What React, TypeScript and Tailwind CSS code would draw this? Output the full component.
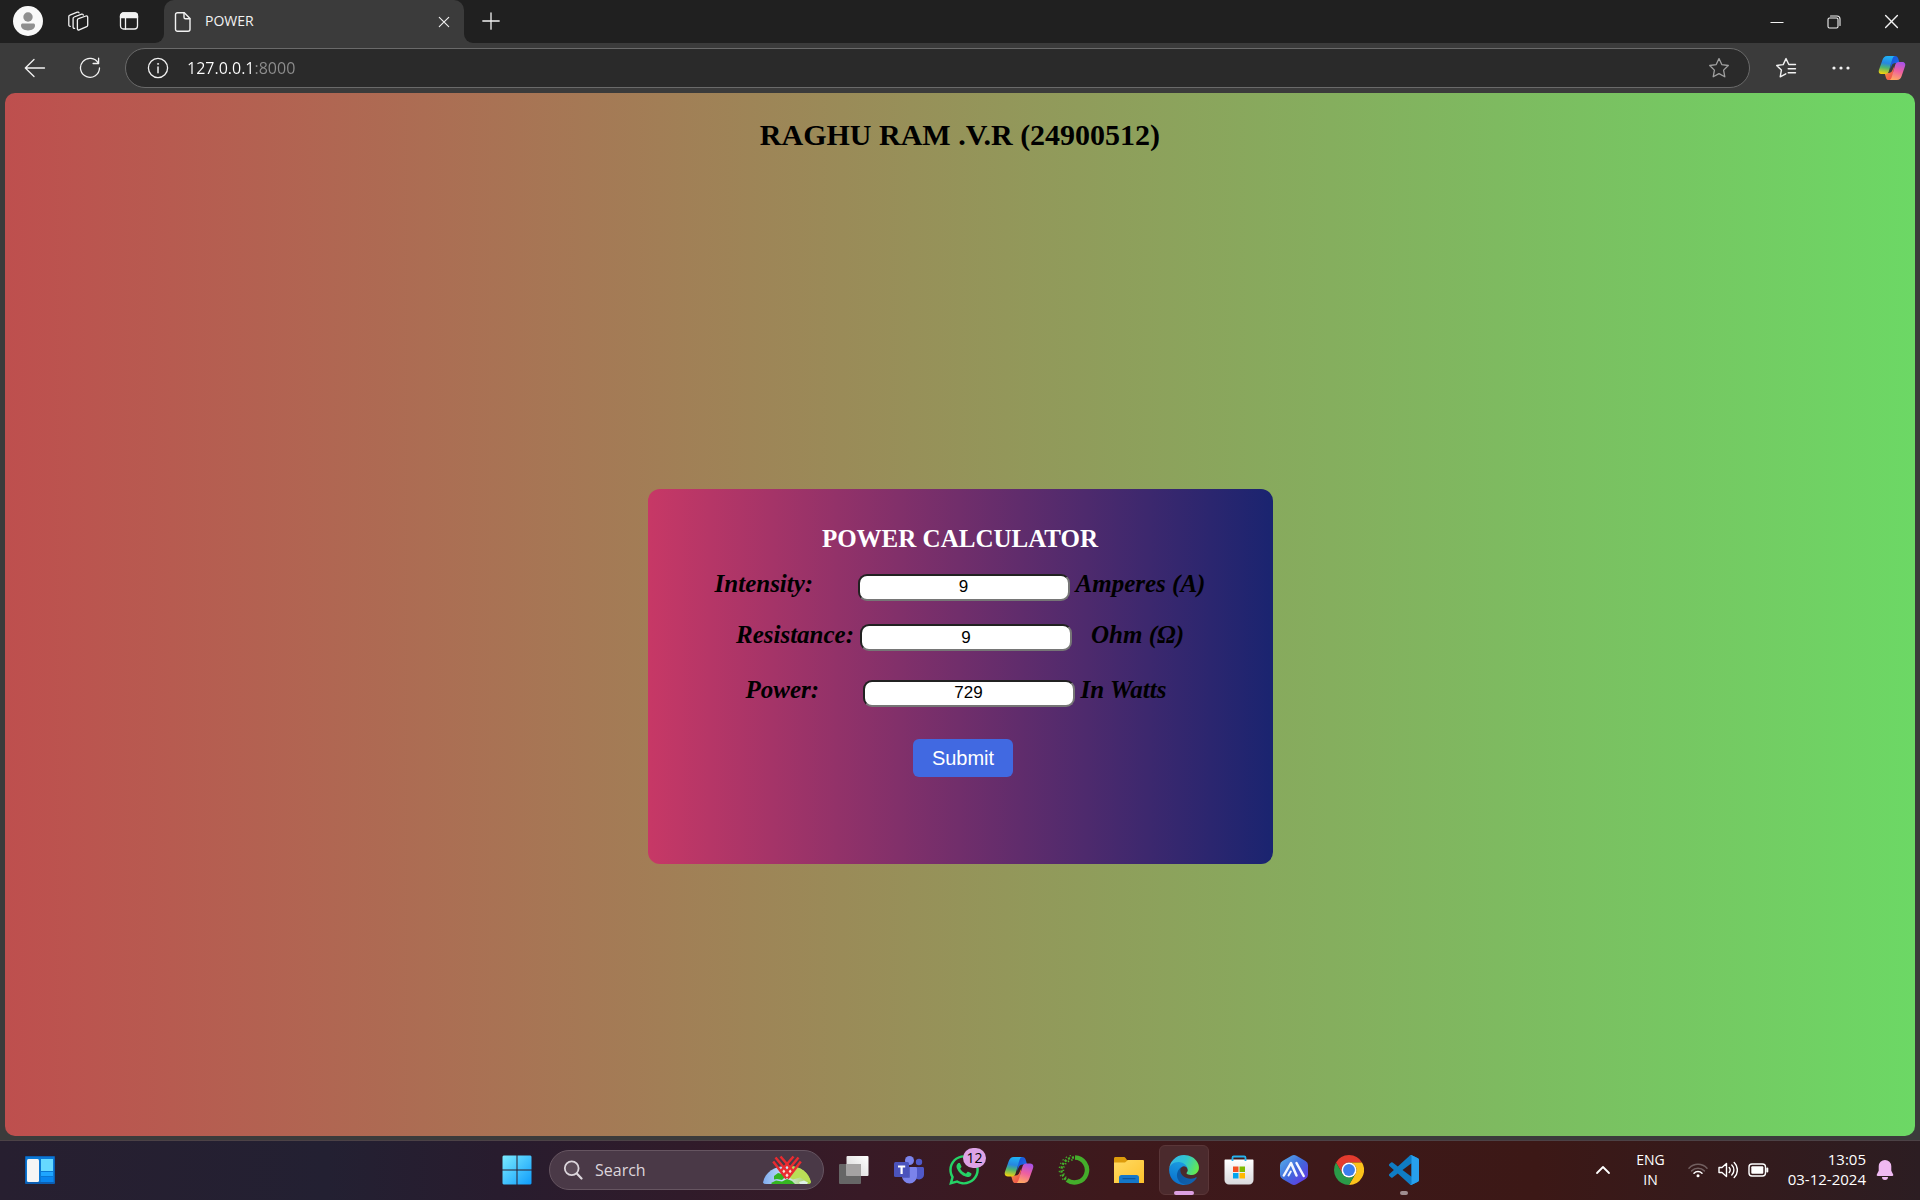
import { useState, type ReactNode } from "react";
import { FaWhatsapp } from "react-icons/fa";

/* ---------- browser chrome icons ---------- */

const line = { fill: "none", stroke: "currentColor", strokeLinecap: "round", strokeLinejoin: "round" } as const;

function ProfileIcon() {
  return (
    <svg viewBox="0 0 30 30" className="size-[30px]">
      <circle cx="15" cy="15" r="15" fill="#f9f9f9" />
      <circle cx="15" cy="11" r="4.7" fill="#8f8f8f" />
      <path d="M8 19.2c0-1 .8-1.7 1.7-1.7h10.6c.9 0 1.7.7 1.7 1.7 0 3.4-3 5.2-7 5.2s-7-1.800-7-5.200z" fill="#8f8f8f" />
    </svg>
  );
}

function WorkspacesIcon() {
  return (
    <svg viewBox="0 0 22 22" className="size-[22px]" {...line} strokeWidth="1.300">
      <path d="M11.500 8.600 18.900 6c.9-.3 1.800.3 1.800 1.200v8c0 .7-.4 1.200-1 1.400l-7.500 3.300c-.9.4-1.800-.2-1.800-1.100v-8.700c0-.7.400-1.300 1.100-1.500z" />
      <path d="M7.600 18.300c-.8.200-1.500-.3-1.500-1.100V8.500c0-.7.4-1.300 1.100-1.500l7.400-2.800c.8-.3 1.600.1 1.700.8" />
      <path d="M3.300 16.300c-.8.100-1.500-.4-1.500-1.200V6.600c0-.7.400-1.300 1.100-1.500l7.400-2.900c.8-.3 1.500 0 1.700.7" />
    </svg>
  );
}

function TabActionsIcon() {
  return (
    <svg viewBox="0 0 20 20" className="size-5" {...line} strokeWidth="1.300">
      <rect x="1.500" y="2" width="17" height="16" rx="3" />
      <path d="M1.500 6.500V5a3 3 0 0 1 3-3h11a3 3 0 0 1 3 3v1.500z" fill="currentColor" />
      <path d="M6.500 7v11" />
    </svg>
  );
}

function DocumentIcon() {
  return (
    <svg viewBox="0 0 18 22" className="h-[22px] w-[18px]" {...line} strokeWidth="1.400">
      <path d="M3.500 1.700h6.800L16 7.500v10.800a2 2 0 0 1-2 2H3.500a2 2 0 0 1-2-2V3.700a2 2 0 0 1 2-2z" />
      <path d="M10 1.900v4.300c0 .9.600 1.500 1.500 1.500h4.300" />
    </svg>
  );
}

function CrossIcon({ className }: { className: string }) {
  return (
    <svg viewBox="0 0 14 14" className={className} {...line} strokeWidth="1.300">
      <path d="m1.500 1.500 11 11m0-11-11 11" />
    </svg>
  );
}

function PlusIcon() {
  return (
    <svg viewBox="0 0 18 18" className="size-[18px]" {...line} strokeWidth="1.300">
      <path d="M9 .8v16.400M.8 9h16.400" />
    </svg>
  );
}

function BackIcon() {
  return (
    <svg viewBox="0 0 22 20" className="h-5 w-[22px]" {...line} strokeWidth="1.300">
      <path d="M20.500 10H1.500M10 1.500 1.300 10l8.700 8.500" />
    </svg>
  );
}

function ReloadIcon() {
  return (
    <svg viewBox="0 0 22 22" className="size-[22px]" {...line} strokeWidth="1.300">
      <path d="M19.300 6.200A9.500 9.500 0 1 0 20.500 11" />
      <path d="M19.600 1.200v5.300h-5.500" />
    </svg>
  );
}

function InfoIcon() {
  return (
    <svg viewBox="0 0 22 22" className="size-[22px]" {...line} strokeWidth="1.300">
      <circle cx="11" cy="11" r="9.600" />
      <path d="M11 10v5.800" strokeWidth="1.500" />
      <circle cx="11" cy="6.900" r=".6" fill="currentColor" strokeWidth=".6" />
    </svg>
  );
}

function StarIcon() {
  return (
    <svg viewBox="0 0 22 22" className="size-[22px]" {...line} strokeWidth="1.300">
      <path d="m11 1.600 2.800 6 6.500.9-4.700 4.600 1.200 6.700-5.800-3.200-5.800 3.200 1.200-6.700-4.700-4.600 6.500-.9z" />
    </svg>
  );
}

function FavoritesIcon() {
  return (
    <svg viewBox="0 0 22 22" className="size-[22px]" {...line} strokeWidth="1.400">
      <path d="M20.500 7.500h-6.700L11 1.600l-2.800 6-6.500.9 4.700 4.600-1.200 6.700 5.600-3" />
      <path d="M13.200 11.800h7.300M13.200 15.800h7.300" />
    </svg>
  );
}

function MoreIcon() {
  return (
    <svg viewBox="0 0 18 4" className="h-1 w-[18px]" fill="currentColor">
      <circle cx="2" cy="2" r="1.600" />
      <circle cx="9" cy="2" r="1.600" />
      <circle cx="16" cy="2" r="1.600" />
    </svg>
  );
}

function MinimizeIcon() {
  return (
    <svg viewBox="0 0 14 14" className="size-3.5">
      <path d="M.5 7.500h13" stroke="currentColor" />
    </svg>
  );
}

function RestoreIcon() {
  return (
    <svg viewBox="0 0 14 14" className="size-3.5" {...line} strokeWidth="1.100">
      <rect x="1" y="3" width="10" height="10" rx="1.500" />
      <path d="M3.500 1h6.500a3 3 0 0 1 3 3v6.500" />
    </svg>
  );
}

function CopilotIcon({ id, className }: { id: string; className: string }) {
  return (
    <svg viewBox="0 0 30 28" className={className}>
      <defs>
        <linearGradient id={`${id}-a`} x1="0.500" y1="0" x2="0.350" y2="1">
          <stop offset="0" stopColor="#1fb2f5" />
          <stop offset=".4" stopColor="#2787e0" />
          <stop offset=".65" stopColor="#4fb56f" />
          <stop offset="1" stopColor="#f4d20c" />
        </linearGradient>
        <linearGradient id={`${id}-b`} x1="0.700" y1="0" x2="0.400" y2="1">
          <stop offset="0" stopColor="#a852e8" />
          <stop offset=".5" stopColor="#ee5fa0" />
          <stop offset="1" stopColor="#ffa764" />
        </linearGradient>
        <linearGradient id={`${id}-c`} x1="0" y1="0" x2="1" y2="1">
          <stop offset="0" stopColor="#1350d4" />
          <stop offset="1" stopColor="#2372f0" />
        </linearGradient>
        <linearGradient id={`${id}-d`} x1="0" y1="0" x2="1" y2="1">
          <stop offset="0" stopColor="#f5a13c" />
          <stop offset="1" stopColor="#ee3f50" />
        </linearGradient>
      </defs>
      <path d="M15 1h3.500c1.700 0 2.600 1 3.100 2.600l1.500 4.900h-4.300c-2 0-3.500 1-4.200 3L13 15z" fill={`url(#${id}-c)`} />
      <path d="M15 27h-3.300c-1.900 0-2.700-1-3.200-2.600L7 19.500h4.300c2 0 3.400-1 4.100-3L17.500 12z" fill={`url(#${id}-d)`} />
      <path d="M18.500 1H9.800C7 1 5.500 3 4.600 5.600L1 15.800c-1 3 .5 4.700 3 4.700h3.700c2 0 3.300-1 3.900-2.900L15.500 4c.6-1.800 1.300-3 3-3z" fill={`url(#${id}-a)`} />
      <path d="M11.700 27h8.600c2.700 0 4.200-1.800 5.100-4.400L29 12.200c1-3-.4-4.700-3-4.700h-3.700c-2 0-3.200 1-3.800 2.900L14.600 24c-.6 1.800-1.300 3-2.900 3z" fill={`url(#${id}-b)`} />
    </svg>
  );
}

/* ---------- taskbar icons ---------- */

function WidgetsIcon() {
  return (
    <svg viewBox="0 0 30 28" className="h-7 w-[30px]">
      <rect width="30" height="28" rx="1" fill="#0c5fb4" />
      <rect x="1" y="1" width="28" height="25" fill="#0a78d4" />
      <rect x="2" y="3" width="12" height="23" rx="1.500" fill="#f5f5f5" />
      <rect x="16" y="3" width="12" height="12" fill="#66d9ff" />
      <rect x="16" y="16" width="12" height="4" fill="#1fa6ff" />
      <rect x="16" y="21" width="12" height="5" fill="#0a86ee" />
    </svg>
  );
}

function WindowsIcon() {
  return (
    <svg viewBox="0 0 30 30" className="size-[30px]">
      <defs>
        <linearGradient id="win" gradientUnits="userSpaceOnUse" x1="0" y1="0" x2="30" y2="30">
          <stop offset="0" stopColor="#7cecff" />
          <stop offset="1" stopColor="#0d9bfb" />
        </linearGradient>
      </defs>
      <path d="M1.500.5H14.500V14.500H.5V1.500zM15.500.5H28.500L29.500 1.500V14.500H15.500zM.5 15.500H14.500V29.500H1.500L.5 28.500zM15.500 15.500H29.500V28.500L28.500 29.500H15.500z" fill="url(#win)" />
    </svg>
  );
}

function SearchIcon() {
  return (
    <svg viewBox="0 0 20 20" className="size-5" {...line} stroke="#dcd6dc">
      <circle cx="8.700" cy="8.200" r="6.900" strokeWidth="1.800" fill="#ffffff18" />
      <path d="m13.800 13.500 4.700 5" strokeWidth="2.200" />
    </svg>
  );
}

function GlobeHeartIcon() {
  return (
    <svg viewBox="0 0 48 30" className="h-[30px] w-12">
      <defs>
        <linearGradient id="globe" x1="0" x2="1">
          <stop offset="0" stopColor="#7fadf0" />
          <stop offset=".5" stopColor="#cfe6f8" />
          <stop offset="1" stopColor="#a4d435" />
        </linearGradient>
      </defs>
      <path d="M0 27.500C2 17 11.500 11 24 11S46 17 48 27.500Q47.500 29 45 29H3Q.5 29 0 27.500z" fill="url(#globe)" />
      <path d="M26 11c12 .2 19.500 6 22 16.500l-5-2-6-3-7 2-6-3z" fill="#b9de57" />
      <path d="M11 21l4-3 4 1 3 3-3 3-5-1-3 .5zM8 28l5-2.500 6 1 5-2.500 5 2 3 3H9z" fill="#35b521" />
      <path d="M36 27l5-1.500 4 2-1 1.500h-7z" fill="#ddf1e6" />
      <path d="m24 23-7-8.500h14z" fill="#f8ded0" />
      <g stroke="#ea2b30" strokeWidth="2.500" fill="none">
        <path d="M10.200 6.500 23.300 23.500M12.500 2.500 27 20M17.500 1.500 30.500 16.500" />
        <path d="M37.800 6.500 24.700 23.500M35.500 2.500 21 20M30.500 1.500 17.500 16.500" />
      </g>
    </svg>
  );
}

function TaskViewIcon() {
  return (
    <svg viewBox="0 0 30 28" className="h-7 w-[30px]">
      <defs>
        <linearGradient id="tv" x1="0" x2="1" y1="1" y2="0">
          <stop offset="0" stopColor="#d4d4d4" />
          <stop offset="1" stopColor="#fff" />
        </linearGradient>
      </defs>
      <rect y="8" width="22" height="20" rx="1" fill="#666" />
      <rect x="7.500" width="22" height="20" rx="1" fill="url(#tv)" />
      <rect x="7.500" y="8" width="14.500" height="12" fill="#a5a3a3" />
    </svg>
  );
}

function TeamsIcon() {
  return (
    <svg viewBox="0 0 30 28" className="h-7 w-[30px]">
      <circle cx="25" cy="6" r="3.200" fill="#5059c9" />
      <path d="M20 11h8.500c.8 0 1.500.6 1.500 1.500v6a5 5 0 0 1-10 0z" fill="#5059c9" />
      <circle cx="15.500" cy="4.500" r="4.500" fill="#7b83eb" />
      <path d="M8 11h13.500c.8 0 1.500.6 1.500 1.500v7.500a7.500 7.500 0 0 1-15 0z" fill="#7b83eb" />
      <path d="M9 11h7v9.500c0 1-.7 1.500-1.500 1.500H9z" fill="#565fc4" />
      <rect y="6" width="15" height="15" rx="1.500" fill="#4b53bc" />
      <path d="M4 9.500h7.200v2H8.700V18H6.500v-6.500H4z" fill="#fff" />
    </svg>
  );
}

function AnacondaIcon() {
  return (
    <svg viewBox="0 0 32 32" className="size-8" fill="none" stroke="#44ad2b">
      <path d="M17 3.500a12.500 12.500 0 1 1-8 22.500" strokeWidth="4.500" />
      <path d="M16 3.500A12.500 12.500 0 0 0 8.500 26" strokeWidth="2.400" strokeDasharray="2.200 1.800" />
      <path d="M14.500 6A10.500 10.500 0 0 0 8.500 24" strokeWidth="1.800" strokeDasharray="1.300 2.300" />
      <path d="M13 1.500A14.500 14.500 0 0 0 6 26.500" strokeWidth="1.200" strokeDasharray="1.500 2.700" />
    </svg>
  );
}

function FolderIcon() {
  return (
    <svg viewBox="0 0 30 28" className="h-7 w-[30px]">
      <defs>
        <linearGradient id="fold" x1="0" x2="1" y1="0" y2="1">
          <stop offset="0" stopColor="#ffda63" />
          <stop offset="1" stopColor="#fdc12c" />
        </linearGradient>
      </defs>
      <path d="M0 2.500C0 1.500.7 1 1.500 1h8c1 0 1.700.5 2.300 1.200L13 4h15.500c1 0 1.500.5 1.500 1.500V12H0z" fill="#dd9b0b" />
      <path d="M0 6.500h11L14 4h14.500c1 0 1.500.6 1.500 1.500V27H0z" fill="url(#fold)" />
      <path d="M5 27v-5.500c0-1.500 1-2.500 2.500-2.500h15c1.500 0 2.500 1 2.500 2.500V27z" fill="#1477c9" />
      <path d="M9 22.700h12" stroke="#0b559b" strokeWidth="1.200" strokeLinecap="round" />
    </svg>
  );
}

function EdgeIcon() {
  return (
    <svg viewBox="4 4 257 257" className="size-[30px]">
      <defs>
        <linearGradient id="edge-a" x1=".2" y1=".3" x2="1" y2=".6">
          <stop offset="0" stopColor="#0c59a4" />
          <stop offset="1" stopColor="#1062b0" />
        </linearGradient>
        <linearGradient id="edge-b" x1=".6" y1="0" x2=".3" y2="1">
          <stop offset="0" stopColor="#1b9de2" />
          <stop offset="1" stopColor="#0a6fcb" />
        </linearGradient>
        <linearGradient id="edge-c" x1="0" y1=".3" x2="1" y2=".6">
          <stop offset="0" stopColor="#35b5e9" />
          <stop offset=".5" stopColor="#30c6cf" />
          <stop offset="1" stopColor="#66eb4b" />
        </linearGradient>
      </defs>
      <path fill="url(#edge-a)" d="M235.700 195.500a93.700 93.700 0 0 1-10.600 4.700 101.900 101.900 0 0 1-35.900 6.400c-47.300 0-88.500-32.500-88.500-74.300a31.500 31.500 0 0 1 16.400-27.300c-42.800 1.800-53.800 46.400-53.800 72.500 0 73.900 68.100 81.400 82.800 81.400 7.900 0 19.800-2.300 27-4.600l1.300-.4a128.300 128.300 0 0 0 66.600-52.800 4 4 0 0 0-5.300-5.600Z" />
      <path fill="url(#edge-b)" d="M110.300 246.300A79.200 79.200 0 0 1 87.600 225a80.700 80.700 0 0 1 29.500-120c3.200-1.500 8.500-4.100 15.600-4a32.400 32.400 0 0 1 25.700 13 31.900 31.900 0 0 1 6.300 18.700c0-.2 24.500-79.600-80-79.600-43.900 0-80 41.600-80 78.200a130.200 130.200 0 0 0 12.100 56 128 128 0 0 0 156.400 67 75.500 75.500 0 0 1-62.800-8Z" />
      <path fill="url(#edge-c)" d="M156.900 153.400c-.8 1-3.300 2.500-3.300 5.600 0 2.600 1.700 5.200 4.800 7.300 14.300 10 41.400 8.600 41.500 8.600a59.600 59.600 0 0 0 30.300-8.300 61.400 61.400 0 0 0 30.400-52.900c.3-22.400-8-37.300-11.300-43.900C228 28.800 182.300 4.700 132.600 4.700a128 128 0 0 0-128 126.200c.5-36.500 36.800-66 80-66 3.500 0 23.500.3 42 10a72.600 72.600 0 0 1 30.900 29.300c6.100 10.600 7.200 24.100 7.200 29.500s-2.700 13.300-7.800 19.900Z" />
    </svg>
  );
}

function StoreIcon() {
  return (
    <svg viewBox="0 0 30 30" className="size-[30px]">
      <defs>
        <linearGradient id="store" x1="0" x2="0" y1="0" y2="1">
          <stop offset="0" stopColor="#fff" />
          <stop offset="1" stopColor="#d9dadd" />
        </linearGradient>
      </defs>
      <path d="M.5 5.500c0-.6.4-1 1-1h27c.6 0 1 .4 1 1V25a4.500 4.500 0 0 1-4.500 4.500H5A4.500 4.500 0 0 1 .5 25z" fill="url(#store)" />
      <path d="M8.500 6V2.800c0-.8.5-1.300 1.300-1.300h10.400c.8 0 1.300.5 1.300 1.300V6" fill="none" stroke="#26b3ee" strokeWidth="1.800" />
      <path d="M9 11.500h5.500V17H9z" fill="#f25022" />
      <path d="M15.500 11.500H21V17h-5.500z" fill="#7fba00" />
      <path d="M9 18h5.500v5.500H9z" fill="#00a4ef" />
      <path d="M15.500 18H21v5.500h-5.500z" fill="#ffb900" />
    </svg>
  );
}

function HexPeaksIcon() {
  return (
    <svg viewBox="0 0 28 30" className="h-[30px] w-7">
      <defs>
        <linearGradient id="hex" x1="0" x2="1" y1="0" y2="1">
          <stop offset="0" stopColor="#58b4ea" />
          <stop offset=".5" stopColor="#4168dd" />
          <stop offset="1" stopColor="#6a2fe4" />
        </linearGradient>
      </defs>
      <path d="M11.500.8a5 5 0 0 1 5 0L25.500 6A5 5 0 0 1 28 10.300v9.400A5 5 0 0 1 25.500 24l-9 5.200a5 5 0 0 1-5 0L2.500 24A5 5 0 0 1 0 19.700v-9.400A5 5 0 0 1 2.500 6z" fill="url(#hex)" />
      <g fill="none" stroke="#f4f6ff" strokeWidth="2.500" strokeLinecap="round" strokeLinejoin="round">
        <path d="M3.800 20.500 11 8l5.500 12.500" />
        <path d="m16.500 8 7.200 13" />
        <path d="m8.500 20.500 2.300-4" strokeWidth="2" />
      </g>
    </svg>
  );
}

function ChromeIcon() {
  return (
    <svg viewBox="0 0 48 48" className="size-[30px]">
      <path d="M44.790 12A24 24 0 0 0 3.220 12L13.610 30A12 12 0 0 1 24 12z" fill="#e33b2e" />
      <path d="M24 48A24 24 0 0 0 44.790 12H24a12 12 0 0 1 10.390 18z" fill="#fcc21b" />
      <path d="M3.220 12A24 24 0 0 0 24 48l10.390-18a12 12 0 0 1-20.780 0z" fill="#2a9a48" />
      <circle cx="24" cy="24" r="12" fill="#fff" />
      <circle cx="24" cy="24" r="9.500" fill="#3b7ded" />
    </svg>
  );
}

function CodeIcon() {
  return (
    <svg viewBox="0 0 24 24" className="size-[30px]">
      <path
        fill="#0f7cc4"
        d="M23.150 2.587L18.210.21a1.494 1.494 0 0 0-1.705.29l-9.460 8.630-4.120-3.128a.999.999 0 0 0-1.276.057L.327 7.261A1 1 0 0 0 .326 8.740L3.899 12 .326 15.260a1 1 0 0 0 .001 1.479L1.650 17.940a.999.999 0 0 0 1.276.057l4.120-3.128 9.460 8.630a1.492 1.492 0 0 0 1.704.29l4.942-2.377A1.500 1.500 0 0 0 24 20.060V3.939a1.500 1.500 0 0 0-.85-1.352zm-5.146 14.861L10.826 12l7.178-5.448v10.896z"
      />
      <path fill="#27a0ee" d="M18.210.21l4.940 2.377A1.500 1.500 0 0 1 24 3.939V20.060a1.500 1.500 0 0 1-.848 1.352L18.210 23.789a1.492 1.492 0 0 1-1.704-.29c.6.5 1.498.1 1.498-.7V1.200c0-.8-.9-1.200-1.499-.7A1.494 1.494 0 0 1 18.210.21z" />
    </svg>
  );
}

function ChevronUpIcon() {
  return (
    <svg viewBox="0 0 16 10" className="h-2.5 w-4" {...line} strokeWidth="1.800">
      <path d="m2 8 6-6 6 6" />
    </svg>
  );
}

function WifiIcon() {
  return (
    <svg viewBox="0 0 20 16" className="h-4 w-5" {...line} strokeWidth="1.500">
      <path d="M1 6.200a12.500 12.500 0 0 1 18 0" opacity=".3" />
      <path d="M3.600 8.900a9 9 0 0 1 12.800 0" opacity=".3" />
      <path d="M6 11.200a5.700 5.700 0 0 1 8 0" />
      <circle cx="10" cy="13.800" r="1.500" fill="currentColor" stroke="none" />
    </svg>
  );
}

function VolumeIcon() {
  return (
    <svg viewBox="0 0 20 18" className="h-[18px] w-5" {...line} strokeWidth="1.400">
      <path d="M1 6.500h3L8.500 2.500v13L4 11.500H1z" />
      <path d="M11.200 6.500a4 4 0 0 1 0 5M13.800 4a7 7 0 0 1 0 10M16.200 1.500a10.500 10.500 0 0 1 0 15" />
    </svg>
  );
}

function BatteryIcon() {
  return (
    <svg viewBox="0 0 21 14" className="h-3.5 w-[21px]" {...line} strokeWidth="1.400">
      <rect x="1" y="1" width="16.500" height="12" rx="3" />
      <rect x="3.300" y="3.300" width="12" height="7.400" rx="1" fill="currentColor" stroke="none" />
      <path d="M19.300 5.500v3" strokeWidth="2" />
    </svg>
  );
}

function BellIcon() {
  return (
    <svg viewBox="0 0 18 20" className="h-5 w-[18px]" fill="#efb9f2">
      <path d="M9 0a6.300 6.300 0 0 1 6.300 6.300v4.400l1.900 3.800c.3.700-.1 1.500-.9 1.500H1.700c-.8 0-1.200-.8-.9-1.500l1.900-3.800V6.300A6.300 6.300 0 0 1 9 0zM6 17h6a3 3 0 0 1-6 0z" />
    </svg>
  );
}

/* ---------- browser window ---------- */

function IconButton({ label, className = "", children }: { label: string; className?: string; children: ReactNode }) {
  return (
    <button type="button" aria-label={label} className={`flex shrink-0 items-center justify-center ${className}`}>
      {children}
    </button>
  );
}

function TabStrip() {
  return (
    <div className="flex h-[43px] bg-[#202020] text-[#f2f2f2]">
      <div className="flex items-center pb-px pl-[2px]">
        <IconButton label="Profile" className="w-[51px]"><ProfileIcon /></IconButton>
        <IconButton label="Workspaces" className="w-[49px]"><WorkspacesIcon /></IconButton>
        <IconButton label="Tab actions" className="w-[53px]"><TabActionsIcon /></IconButton>
      </div>
      <div className="w-[9px] bg-[#3b3b3b]">
        <div className="h-full rounded-br-[10px] bg-[#202020]" />
      </div>
      <div className="flex w-[300px] items-center rounded-t-[10px] bg-[#3b3b3b] pr-3 pl-[10px]">
        <DocumentIcon />
        <span className="ml-[13px] flex-1 pb-[2px] text-[14px] leading-5">POWER</span>
        <IconButton label="Close tab" className="size-4"><CrossIcon className="size-3" /></IconButton>
      </div>
      <div className="w-[9px] bg-[#3b3b3b]">
        <div className="h-full rounded-bl-[10px] bg-[#202020]" />
      </div>
      <IconButton label="New tab" className="w-[35px] pb-[2px]"><PlusIcon /></IconButton>
      <div className="ml-auto flex">
        <IconButton label="Minimize" className="w-[57px]"><MinimizeIcon /></IconButton>
        <IconButton label="Restore" className="w-[57px]"><RestoreIcon /></IconButton>
        <IconButton label="Close" className="w-[58px]"><CrossIcon className="size-[15px]" /></IconButton>
      </div>
    </div>
  );
}

function Toolbar() {
  const [address, setAddress] = useState("127.0.0.1:8000");
  return (
    <div className="flex h-[50px] items-center bg-[#3b3b3b] pr-1 pl-2 text-[#f2f2f2]">
      <IconButton label="Back" className="w-[54px]"><BackIcon /></IconButton>
      <IconButton label="Refresh" className="w-[55px]"><ReloadIcon /></IconButton>
      <div className="ml-2 flex h-10 flex-1 items-center rounded-full border border-[#6a6a6a] bg-[#2a2a2a] pr-[19px] pl-[21px]">
        <IconButton label="View site information"><InfoIcon /></IconButton>
        <input
          aria-label="Address"
          value={address}
          onChange={(e) => setAddress(e.target.value)}
          className="ml-[18px] min-w-0 flex-1 bg-[linear-gradient(90deg,#ffffff_66px,#8e8e8e_66px)] bg-clip-text text-[16px] leading-6 text-transparent outline-none"
        />
        <IconButton label="Add to favorites" className="text-[#a0a0a0]"><StarIcon /></IconButton>
      </div>
      <IconButton label="Favorites" className="ml-2 w-[55px]"><FavoritesIcon /></IconButton>
      <IconButton label="Settings and more" className="w-[55px]"><MoreIcon /></IconButton>
      <IconButton label="Copilot" className="w-12"><CopilotIcon id="bar" className="h-[26px] w-7" /></IconButton>
    </div>
  );
}

/* ---------- page ---------- */

const fieldClass =
  "mx-1.5 h-[27px] w-[212px] shrink-0 rounded-[9px] border-2 border-[#767676] bg-white text-center font-['Liberation_Sans',sans-serif] text-[17px] leading-5 font-normal text-black not-italic [border-style:inset]";

function PowerCalculator() {
  const [intensity, setIntensity] = useState("9");
  const [resistance, setResistance] = useState("9");
  const [power, setPower] = useState("729");

  return (
    <form
      onSubmit={(e) => {
        e.preventDefault();
        setPower(String(Number(intensity) ** 2 * Number(resistance)));
      }}
      className="flex min-h-[375px] w-full max-w-[625px] flex-col items-center rounded-xl bg-linear-to-r/srgb from-[#c73866] to-[#1a2470] pt-[34px] text-[25px] leading-8 font-bold"
    >
      <h2 className="text-white">POWER CALCULATOR</h2>
      <div className="mt-[13px] flex items-baseline italic">
        <label htmlFor="intensity" className="w-[137px]">Intensity:</label>
        <input id="intensity" value={intensity} onChange={(e) => setIntensity(e.target.value)} className={fieldClass} />
        <span>Amperes (A)</span>
      </div>
      <div className="mt-[18px] flex items-baseline italic">
        <label htmlFor="resistance">Resistance:</label>
        <input id="resistance" value={resistance} onChange={(e) => setResistance(e.target.value)} className={fieldClass} />
        <span className="pl-[13px]">Ohm (Ω)</span>
      </div>
      <div className="mt-[23px] flex items-baseline italic">
        <label htmlFor="power" className="w-[111px]">Power:</label>
        <input id="power" value={power} readOnly className={fieldClass} />
        <span className="pr-2">In Watts</span>
      </div>
      <div className="mt-8 pl-1.5">
        <button
          type="submit"
          className="flex h-[38px] items-center rounded-md bg-[#4169e1] px-[19px] font-['Liberation_Sans',sans-serif] text-[20px] leading-6 font-normal text-white"
        >
          Submit
        </button>
      </div>
    </form>
  );
}

/* ---------- taskbar ---------- */

function TaskButton({ label, active = false, running = false, children }: { label: string; active?: boolean; running?: boolean; children: ReactNode }) {
  return (
    <button type="button" aria-label={label} className="flex h-full w-[55px] shrink-0 items-center justify-center">
      <span
        className={`relative flex size-[50px] items-center justify-center rounded-md ${
          active ? "border border-[#5a3638] bg-[#4b2a2d]" : ""
        }`}
      >
        {children}
        {active && <span className="absolute -bottom-px h-1 w-5 rounded-full bg-[#dca0e2]" />}
        {running && <span className="absolute bottom-0 h-1 w-2 rounded-full bg-[#a08e90]" />}
      </span>
    </button>
  );
}

function Taskbar() {
  return (
    <footer className="grid h-[60px] grid-cols-[1fr_auto_1fr] items-stretch border-t border-[#4c4246] bg-[linear-gradient(90deg,#271f30_0%,#232032_17%,#281c2e_26%,#381a26_45%,#3e191c_58%,#3c1816_80%,#2c1d22_100%)] pb-[2px] text-white">
      <div className="flex items-center pl-[25px]">
        <IconButton label="Widgets"><WidgetsIcon /></IconButton>
      </div>
      <div className="flex items-center">
        <TaskButton label="Start"><WindowsIcon /></TaskButton>
        <label className="mr-[2px] ml-[5px] flex h-10 w-[275px] items-center rounded-full border border-[#665561] bg-[#4a3947] pr-3 pl-[13px]">
          <SearchIcon />
          <input
            aria-label="Search"
            placeholder="Search"
            className="ml-3 min-w-0 flex-1 bg-transparent text-[16px] leading-6 outline-none placeholder:text-[#dcd5db]"
          />
          <GlobeHeartIcon />
        </label>
        <TaskButton label="Task view"><TaskViewIcon /></TaskButton>
        <TaskButton label="Teams"><TeamsIcon /></TaskButton>
        <TaskButton label="WhatsApp">
          <FaWhatsapp className="size-[34px] text-[#25d366]" />
          <span className="absolute top-[3px] right-[3px] flex h-5 items-center rounded-full bg-[#dda3e6] px-[3px] text-[14px] leading-4 text-black">12</span>
        </TaskButton>
        <TaskButton label="Copilot"><CopilotIcon id="task" className="h-7 w-[30px]" /></TaskButton>
        <TaskButton label="Anaconda"><AnacondaIcon /></TaskButton>
        <TaskButton label="File Explorer"><FolderIcon /></TaskButton>
        <TaskButton label="Edge" active><EdgeIcon /></TaskButton>
        <TaskButton label="Microsoft Store"><StoreIcon /></TaskButton>
        <TaskButton label="Peaks"><HexPeaksIcon /></TaskButton>
        <TaskButton label="Chrome"><ChromeIcon /></TaskButton>
        <TaskButton label="Visual Studio Code" running><CodeIcon /></TaskButton>
      </div>
      <div className="flex items-center justify-end pr-[26px]">
        <IconButton label="Show hidden icons"><ChevronUpIcon /></IconButton>
        <button type="button" className="ml-[25px] text-center text-[14px] leading-5">ENG<br />IN</button>
        <button type="button" aria-label="Network, volume and battery" className="ml-[23px] flex items-center gap-2.5">
          <WifiIcon />
          <VolumeIcon />
          <BatteryIcon />
        </button>
        <button type="button" className="ml-[19px] pb-px text-right text-[15px] leading-5">13:05<br />03-12-2024</button>
        <IconButton label="Notifications" className="ml-2.5"><BellIcon /></IconButton>
      </div>
    </footer>
  );
}

export default function App() {
  return (
    <div className="flex min-h-screen flex-col bg-[#3b3b3b] font-['Open_Sans',sans-serif]">
      <header>
        <TabStrip />
        <Toolbar />
      </header>
      <main className="mx-[5px] mb-1 flex flex-1 flex-col items-center rounded-[10px] bg-linear-to-r/srgb from-[#be4f4e] to-[#6cd865] pt-6 font-['Liberation_Serif',serif] text-black">
        <h1 className="text-[30px] leading-9 font-bold">RAGHU RAM .V.R (24900512)</h1>
        <div className="flex w-full flex-1 items-center justify-center pt-16">
          <PowerCalculator />
        </div>
      </main>
      <Taskbar />
    </div>
  );
}
